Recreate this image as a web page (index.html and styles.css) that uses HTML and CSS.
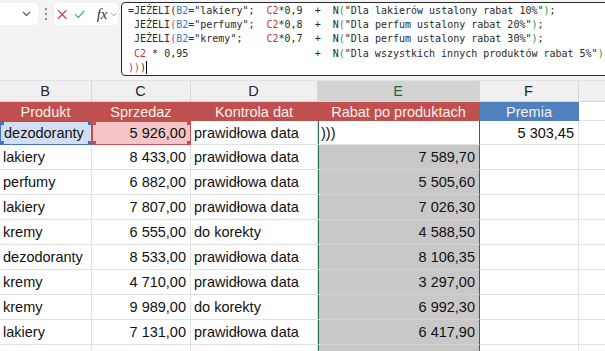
FILE: index.html
```html
<!DOCTYPE html>
<html lang="pl">
<head>
    <meta charset="UTF-8">
    <title>Rabat po produktach</title>
    <link rel="stylesheet" href="styles.css">
</head>
<body>
    <div class="toolbar">
        <div class="namebox">
            <svg width="9" height="6" viewBox="0 0 9 6"><path d="M1 1l3.5 3.5L8 1" fill="none" stroke="#555" stroke-width="1.1"/></svg>
        </div>
        <div class="dots">
            <svg width="4" height="14" viewBox="0 0 4 14"><circle cx="2" cy="2" r="1.1" fill="#777"/><circle cx="2" cy="7" r="1.1" fill="#777"/><circle cx="2" cy="12" r="1.1" fill="#777"/></svg>
        </div>
        <div class="fxbox">
            <svg width="11" height="11" viewBox="0 0 11 11"><path d="M1 1l9 9M10 1l-9 9" stroke="#d9363e" stroke-width="1.2"/></svg>
            <svg width="12" height="10" viewBox="0 0 12 10"><path d="M1 5.2l3.6 3.6L11 1.4" fill="none" stroke="#3fa865" stroke-width="1.2"/></svg>
            <span class="fx">fx</span>
            <svg width="8" height="5" viewBox="0 0 8 5"><path d="M1 1l3 3 3-3" fill="none" stroke="#999" stroke-width="1"/></svg>
        </div>
        <div class="formula">
            <div class="line">=JEŻELI<span class="p1">(</span><span class="rb">B2</span>="lakiery";  <span class="rc">C2</span>*0,9  +  N<span class="pg">(</span>"Dla lakierów ustalony rabat 10%"<span class="pg">)</span>;</div>
            <div class="line"> JEŻELI<span class="p2">(</span><span class="rb">B2</span>="perfumy";  <span class="rc">C2</span>*0,8  +  N<span class="pg">(</span>"Dla perfum ustalony rabat 20%"<span class="pg">)</span>;</div>
            <div class="line"> JEŻELI<span class="p3">(</span><span class="rb">B2</span>="kremy";    <span class="rc">C2</span>*0,7  +  N<span class="pg">(</span>"Dla perfum ustalony rabat 30%"<span class="pg">)</span>;</div>
            <div class="line"> <span class="rc">C2</span> * 0,95                     +  N<span class="pg">(</span>"Dla wszystkich innych produktów rabat 5%"<span class="pg">)</span></div>
            <div class="line"><span class="p3">)</span><span class="p2">)</span><span class="p1">)</span><span class="caret"></span></div>
        </div>
    </div>

    <div class="sheet">
        <div class="c col">B</div>
        <div class="c col">C</div>
        <div class="c col">D</div>
        <div class="c col col-sel">E</div>
        <div class="c col">F</div>
        <div class="c col"></div>

        <div class="c hd">Produkt</div>
        <div class="c hd">Sprzedaz</div>
        <div class="c hd">Kontrola dat</div>
        <div class="c hd">Rabat po produktach</div>
        <div class="c hd blue">Premia</div>
        <div class="c"></div>

        <div class="c ref-b">dezodoranty</div>
        <div class="c num ref-c">5 926,00</div>
        <div class="c">prawidłowa data</div>
        <div class="c sel active">)))</div>
        <div class="c num">5 303,45</div>
        <div class="c"></div>

        <div class="c">lakiery</div>
        <div class="c num">8 433,00</div>
        <div class="c">prawidłowa data</div>
        <div class="c num sel">7 589,70</div>
        <div class="c"></div>
        <div class="c"></div>

        <div class="c">perfumy</div>
        <div class="c num">6 882,00</div>
        <div class="c">prawidłowa data</div>
        <div class="c num sel">5 505,60</div>
        <div class="c"></div>
        <div class="c"></div>

        <div class="c">lakiery</div>
        <div class="c num">7 807,00</div>
        <div class="c">prawidłowa data</div>
        <div class="c num sel">7 026,30</div>
        <div class="c"></div>
        <div class="c"></div>

        <div class="c">kremy</div>
        <div class="c num">6 555,00</div>
        <div class="c">do korekty</div>
        <div class="c num sel">4 588,50</div>
        <div class="c"></div>
        <div class="c"></div>

        <div class="c">dezodoranty</div>
        <div class="c num">8 533,00</div>
        <div class="c">prawidłowa data</div>
        <div class="c num sel">8 106,35</div>
        <div class="c"></div>
        <div class="c"></div>

        <div class="c">kremy</div>
        <div class="c num">4 710,00</div>
        <div class="c">prawidłowa data</div>
        <div class="c num sel">3 297,00</div>
        <div class="c"></div>
        <div class="c"></div>

        <div class="c">kremy</div>
        <div class="c num">9 989,00</div>
        <div class="c">do korekty</div>
        <div class="c num sel">6 992,30</div>
        <div class="c"></div>
        <div class="c"></div>

        <div class="c">lakiery</div>
        <div class="c num">7 131,00</div>
        <div class="c">prawidłowa data</div>
        <div class="c num sel">6 417,90</div>
        <div class="c"></div>
        <div class="c"></div>

        <div class="c"></div>
        <div class="c"></div>
        <div class="c"></div>
        <div class="c sel"></div>
        <div class="c"></div>
        <div class="c"></div>
    </div>
</body>
</html>
```

FILE: styles.css
```css
* {
    box-sizing: border-box;
}

body {
    margin: 0;
    width: 605px;
    height: 351px;
    overflow: hidden;
    background: #fff;
    font-family: 'Liberation Sans', Arial, sans-serif;
}

/* formula bar */
.toolbar {
    display: flex;
    align-items: flex-start;
    height: 81px;
    background: #f3f3f3;
    border-bottom: 1px solid #e2e2e2;
}

.toolbar > * {
    flex-shrink: 0;
}

.namebox {
    width: 38px;
    height: 22px;
    margin-top: 3px;
    background: #fff;
    border-radius: 0 4px 4px 0;
    display: flex;
    align-items: center;
    justify-content: flex-end;
    padding-right: 7px;
}

.dots {
    width: 16px;
    height: 22px;
    margin-top: 3px;
    display: flex;
    align-items: center;
    justify-content: center;
}

.fxbox {
    width: 64px;
    height: 22px;
    margin-top: 3px;
    background: #fff;
    border-radius: 4px;
    display: flex;
    align-items: center;
    gap: 7px;
    padding-left: 3px;
}

.fx {
    font-family: 'Liberation Serif', serif;
    font-style: italic;
    font-size: 15px;
    color: #333;
    margin-left: 4px;
    margin-right: -4px;
}

.formula {
    width: 520px;
    height: 74px;
    margin: 2px 0 0 3px;
    padding: 1px 0 0 6px;
    background: #fff;
    border: 1px solid #2b2b2b;
    border-radius: 4px;
    font-family: 'DejaVu Sans Mono', monospace;
    font-size: 10px;
    line-height: 14.2px;
    color: #2a2a2a;
}

.line {
    white-space: pre;
    height: 14.2px;
}

.rb { color: #3a78c9; }
.rc { color: #c0392f; }
.p1 { color: #2a2a2a; }
.p2 { color: #d2436a; }
.p3 { color: #8a3fb0; }
.pg { color: #1f9a3a; }

.caret {
    display: inline-block;
    width: 1px;
    height: 13px;
    background: #000;
    vertical-align: -3px;
}

/* sheet */
.sheet {
    display: grid;
    grid-template-columns: 92px 99px 127px 162px 99px 60px;
    grid-template-rows: 21px 19px 24px;
    grid-auto-rows: 25px;
}

.c {
    display: flex;
    align-items: center;
    padding: 0 4px 0 3px;
    border-right: 1px solid #e1e1e1;
    border-bottom: 1px solid #e1e1e1;
    white-space: nowrap;
    overflow: hidden;
    font-size: 14.5px;
    color: #111;
}

.num {
    justify-content: flex-end;
}

.col {
    justify-content: center;
    background: #f0f0f0;
    border-right-color: #d6d6d6;
    border-bottom-color: #d6d6d6;
    color: #262626;
}

.col-sel {
    background: #d3d3d3;
    color: #1d6b3c;
}

.hd {
    justify-content: center;
    background: #c0504d;
    border: none;
    color: #fbeeee;
}

.hd.blue {
    background: #4f81bd;
}

.sel {
    background: #c8c8c8;
    border-bottom-color: #d2d2d2;
    border-right-color: #217346;
    box-shadow: inset 1px 0 #217346;
}

.active {
    background: #fff;
    border-bottom-color: #e1e1e1;
}

.ref-b {
    border: 1px solid #4472c4;
    background:
        linear-gradient(#4472c4, #4472c4) left top / 3px 3px no-repeat,
        linear-gradient(#4472c4, #4472c4) right top / 3px 3px no-repeat,
        linear-gradient(#4472c4, #4472c4) left bottom / 3px 3px no-repeat,
        linear-gradient(#4472c4, #4472c4) right bottom / 3px 3px no-repeat,
        #d3def3;
}

.ref-c {
    border: 1px solid #c94f55;
    background:
        linear-gradient(#c94f55, #c94f55) left top / 3px 3px no-repeat,
        linear-gradient(#c94f55, #c94f55) right top / 3px 3px no-repeat,
        linear-gradient(#c94f55, #c94f55) left bottom / 3px 3px no-repeat,
        linear-gradient(#c94f55, #c94f55) right bottom / 3px 3px no-repeat,
        #f3c5c7;
}
```
